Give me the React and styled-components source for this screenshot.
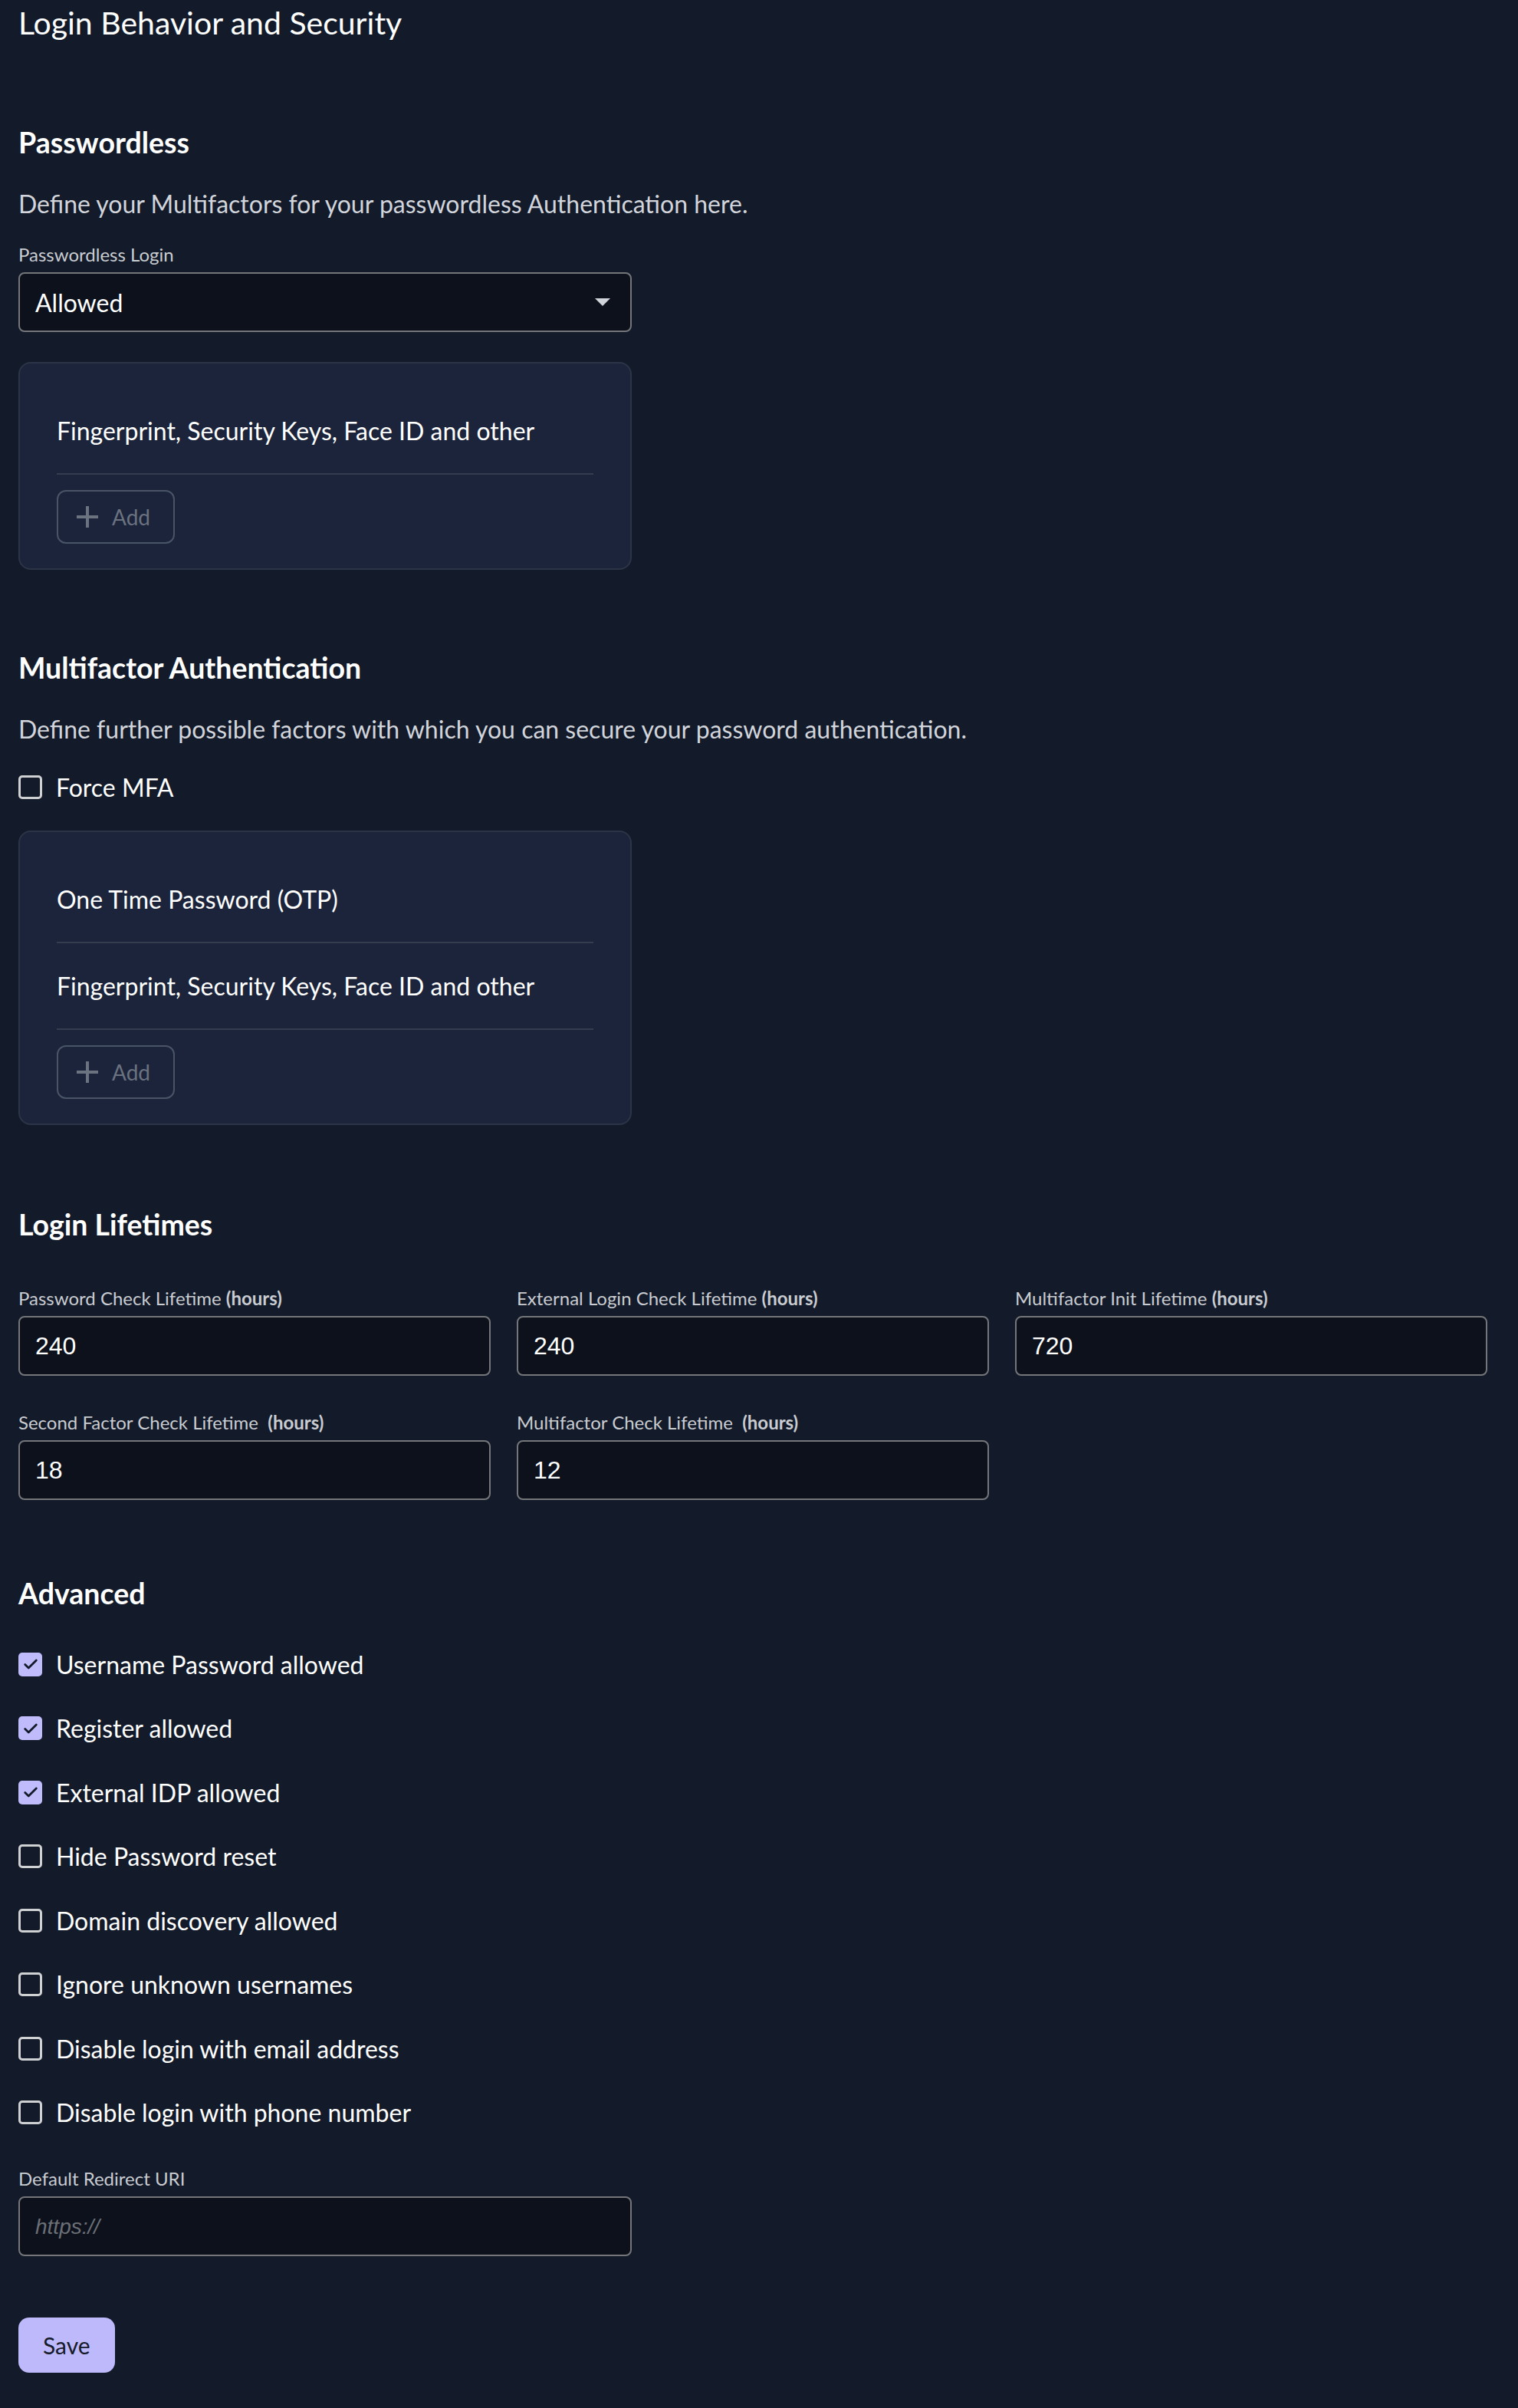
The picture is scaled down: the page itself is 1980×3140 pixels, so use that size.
import React from 'react';
import styled, { createGlobalStyle } from 'styled-components';

const GlobalStyle = createGlobalStyle`
  html, body {
    margin: 0;
    padding: 0;
    background: #131a29;
  }
  * {
    box-sizing: border-box;
  }
`;

const Page = styled.div`
  padding: 0 40px 24px 24px;
  font-family: 'Lato', 'Noto Sans', sans-serif;
  color: #ffffff;
  background: #131a29;
`;

const PageTitle = styled.h1`
  margin: 0;
  font-size: 41px;
  line-height: 60px;
  font-weight: 400;
`;

const SectionTitle = styled.h2`
  margin: ${({ $top }) => $top || 100}px 0 0;
  font-size: 37.5px;
  line-height: 56px;
  font-weight: 700;
`;

const Description = styled.p`
  margin: 28px 0 0;
  font-size: 32px;
  line-height: 48px;
  color: #d1d5db;
`;

const Field = styled.div`
  display: flex;
  flex-direction: column;
  gap: 7px;
  width: ${({ $width }) => $width || 'auto'};
  margin-top: ${({ $top }) => $top || 0}px;
`;

const FieldLabel = styled.label`
  font-size: 24px;
  line-height: 32px;
  color: #c9ccd1;

  b {
    font-weight: 700;
  }
`;

const InputBox = styled.div`
  display: flex;
  align-items: center;
  justify-content: space-between;
  height: 78px;
  padding: 0 26px 0 20px;
  border: 2px solid #747679;
  border-radius: 8px;
  background: #0c111c;
`;

const SelectValue = styled.span`
  font-size: 32px;
  color: #ffffff;
`;

const Caret = styled.span`
  width: 0;
  height: 0;
  border-left: 10px solid transparent;
  border-right: 10px solid transparent;
  border-top: 10px solid #d1d5db;
`;

const TextInput = styled.input`
  width: 100%;
  height: 78px;
  padding: 0 20px;
  border: 2px solid #747679;
  border-radius: 8px;
  background: #0c111c;
  color: #ffffff;
  font-family: 'Liberation Sans', Arial, sans-serif;
  font-size: 32px;
  outline: none;

  &::placeholder {
    color: #6b6f76;
    font-style: italic;
    font-size: 28px;
  }
`;

const Card = styled.div`
  width: 800px;
  margin-top: ${({ $top }) => $top}px;
  padding: 32px 48px;
  border: 2px solid #2c3547;
  border-radius: 16px;
  background: #1b243a;
`;

const FactorRow = styled.div`
  display: flex;
  align-items: center;
  height: 113px;
  border-bottom: 2px solid #343d4f;
  font-size: 32px;
  color: #ffffff;
`;

const AddButton = styled.button`
  display: flex;
  align-items: center;
  gap: 18px;
  height: 70px;
  margin-top: 20px;
  padding: 0 30px 0 24px;
  border: 2px solid #4a5467;
  border-radius: 12px;
  background: transparent;
  color: #6b7280;
  font-family: inherit;
  font-size: 28px;
`;

const CheckRow = styled.label`
  display: flex;
  align-items: center;
  gap: 18px;
  height: 48px;
  margin-top: ${({ $top }) => $top || 0}px;
  font-size: 32px;
  color: #ffffff;
`;

const Box = styled.span`
  display: flex;
  align-items: center;
  justify-content: center;
  width: 31px;
  height: 31px;
  border-radius: 5px;
  border: ${({ $checked }) => ($checked ? 'none' : '3px solid #cfd0d2')};
  background: ${({ $checked }) => ($checked ? '#c0bbfb' : 'transparent')};
`;

const CheckList = styled.div`
  display: flex;
  flex-direction: column;
  gap: 35.5px;
  margin-top: 40px;
`;

const LifetimeGrid = styled.div`
  display: grid;
  grid-template-columns: repeat(3, 1fr);
  column-gap: 34px;
  row-gap: 45px;
  margin-top: 52px;
`;

const SaveButton = styled.button`
  display: block;
  height: 72px;
  margin-top: 80px;
  padding: 0 32px;
  border: none;
  border-radius: 14px;
  background: #bdb9fa;
  color: #161b2a;
  font-family: inherit;
  font-size: 30px;
`;

const Checkbox = ({ checked, label, top }) => (
  <CheckRow $top={top}>
    <Box $checked={checked}>
      {checked && (
        <svg width="22" height="22" viewBox="0 0 24 24" fill="none">
          <path d="M4 12.5l5 5L20 6.5" stroke="#131a29" strokeWidth="3" strokeLinecap="round" strokeLinejoin="round" />
        </svg>
      )}
    </Box>
    {label}
  </CheckRow>
);

const PlusIcon = () => (
  <svg width="28" height="28" viewBox="0 0 28 28">
    <path d="M14 0v28M0 14h28" stroke="#6b7280" strokeWidth="4" />
  </svg>
);

const FactorCard = ({ factors, top }) => (
  <Card $top={top}>
    {factors.map((f) => (
      <FactorRow key={f}>{f}</FactorRow>
    ))}
    <AddButton>
      <PlusIcon />
      Add
    </AddButton>
  </Card>
);

const lifetimes = [
  { name: 'Password Check Lifetime', value: '240' },
  { name: 'External Login Check Lifetime', value: '240' },
  { name: 'Multifactor Init Lifetime', value: '720' },
  { name: 'Second Factor Check Lifetime\u00a0', value: '18' },
  { name: 'Multifactor Check Lifetime\u00a0', value: '12' },
];

const advanced = [
  { label: 'Username Password allowed', checked: true },
  { label: 'Register allowed', checked: true },
  { label: 'External IDP allowed', checked: true },
  { label: 'Hide Password reset', checked: false },
  { label: 'Domain discovery allowed', checked: false },
  { label: 'Ignore unknown usernames', checked: false },
  { label: 'Disable login with email address', checked: false },
  { label: 'Disable login with phone number', checked: false },
];

const FINGERPRINT = 'Fingerprint, Security Keys, Face ID and other';

export default function App() {
  return (
    <Page>
      <GlobalStyle />
      <PageTitle>Login Behavior and Security</PageTitle>

      <SectionTitle $top={98}>Passwordless</SectionTitle>
      <Description>Define your Multifactors for your passwordless Authentication here.</Description>
      <Field $top={26} $width="800px">
        <FieldLabel>Passwordless Login</FieldLabel>
        <InputBox>
          <SelectValue>Allowed</SelectValue>
          <Caret />
        </InputBox>
      </Field>
      <FactorCard top={39} factors={[FINGERPRINT]} />

      <SectionTitle>Multifactor Authentication</SectionTitle>
      <Description>Define further possible factors with which you can secure your password authentication.</Description>
      <Checkbox top={27} label="Force MFA" checked={false} />
      <FactorCard top={33} factors={['One Time Password (OTP)', FINGERPRINT]} />

      <SectionTitle $top={102}>Login Lifetimes</SectionTitle>
      <LifetimeGrid>
        {lifetimes.map(({ name, value }) => (
          <Field key={name}>
            <FieldLabel>
              {name} <b>(hours)</b>
            </FieldLabel>
            <TextInput defaultValue={value} />
          </Field>
        ))}
      </LifetimeGrid>

      <SectionTitle $top={94}>Advanced</SectionTitle>
      <CheckList>
        {advanced.map(({ label, checked }) => (
          <Checkbox key={label} label={label} checked={checked} />
        ))}
      </CheckList>

      <Field $top={46} $width="800px">
        <FieldLabel>Default Redirect URI</FieldLabel>
        <TextInput placeholder="https://" />
      </Field>

      <SaveButton>Save</SaveButton>
    </Page>
  );
}
